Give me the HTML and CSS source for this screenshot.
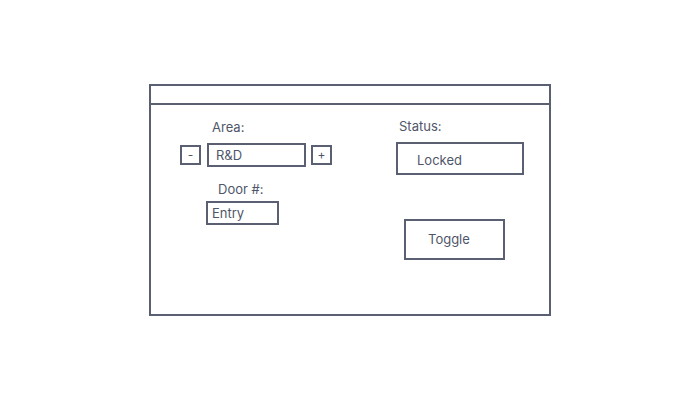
FILE: index.html
```html
<!DOCTYPE html>
<html>
<head>
<meta charset="utf-8">
<link rel="stylesheet" href="styles.css">
</head>
<body>
<div class="window">
  <div class="titlebar"></div>
  <div class="content">
    <div class="col-left">
      <div class="label area-label">Area:</div>
      <div class="stepper">
        <div class="step-btn">-</div>
        <div class="field area-field">R&amp;D</div>
        <div class="step-btn">+</div>
      </div>
      <div class="label door-label">Door #:</div>
      <div class="field door-field">Entry</div>
    </div>
    <div class="col-right">
      <div class="label status-label">Status:</div>
      <div class="status-box">Locked</div>
      <div class="toggle-btn">Toggle</div>
    </div>
  </div>
</div>
</body>
</html>
```
FILE: styles.css
```css
* { box-sizing: border-box; }
html, body { margin: 0; padding: 0; background: #ffffff; }
body {
  font-family: Inter, "Liberation Sans", sans-serif;
  font-size: 13px;
  color: #50566a;
}
.window {
  margin: 84px 0 0 149px;
  width: 402px;
  height: 232px;
  border: 2px solid #5a6072;
  display: flex;
  flex-direction: column;
}
.titlebar {
  height: 19px;
  border-bottom: 2px solid #5a6072;
  flex: none;
}
.content {
  display: flex;
  flex: 1;
}
.label { line-height: 16px; height: 16px; }
.col-left {
  margin-left: 29px;
  display: flex;
  flex-direction: column;
  align-items: flex-start;
}
.area-label { margin-top: 14px; margin-left: 32px; }
.stepper {
  margin-top: 8px;
  display: flex;
  align-items: center;
}
.step-btn {
  width: 21px;
  height: 20px;
  border: 2px solid #5a6072;
  display: flex;
  align-items: center;
  justify-content: center;
  font-size: 12px;
  line-height: 1;
}
.field {
  border: 2px solid #5a6072;
  display: flex;
  align-items: center;
}
.area-field {
  width: 99px;
  height: 24px;
  margin: 0 5px 0 6px;
  padding-left: 7px;
}
.door-label { margin-top: 14px; margin-left: 38px; }
.door-field {
  margin-top: 4px;
  margin-left: 26px;
  width: 73px;
  height: 24px;
  padding-left: 4px;
}
.col-right {
  margin-left: 64px;
  display: flex;
  flex-direction: column;
  align-items: flex-start;
}
.status-label { margin-top: 13px; margin-left: 3px; }
.status-box {
  margin-top: 8px;
  width: 128px;
  height: 33px;
  border: 2px solid #5a6072;
  padding-left: 19px;
  padding-top: 2px;
  display: flex;
  align-items: center;
}
.toggle-btn {
  margin-top: 44px;
  margin-left: 8px;
  width: 101px;
  height: 41px;
  border: 2px solid #5a6072;
  padding-left: 22px;
  padding-bottom: 1px;
  display: flex;
  align-items: center;
}
```
